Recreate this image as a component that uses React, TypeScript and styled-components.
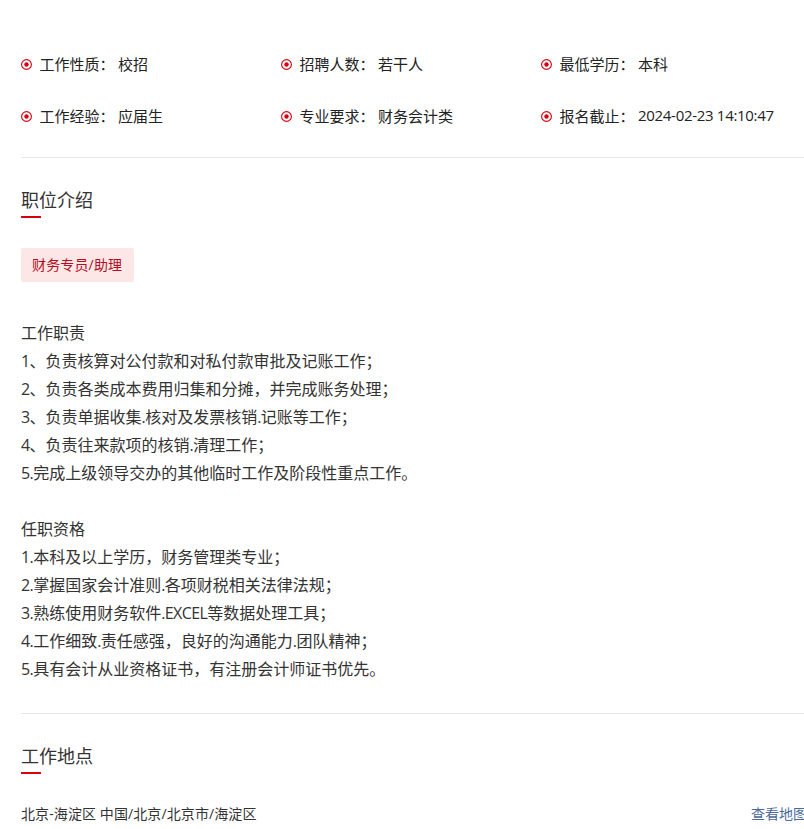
import styled, { createGlobalStyle } from "styled-components";

const GlobalStyle = createGlobalStyle`
    html, body { margin: 0; padding: 0; background: #fff; overflow: hidden; }
    body { font-family: "Open Sans", "Noto Sans CJK SC", sans-serif; color: #333; }
`

const Page = styled.div`
    width: 804px; height: 829px; overflow: hidden;
    padding: 38px 0 0 21px; box-sizing: border-box;
`
const Content = styled.div`
    width: 786px;
`
const MetaGrid = styled.div`
    display: grid; grid-template-columns: repeat(3, 260px); grid-auto-rows: 52px;
    padding-bottom: 15px;
    border-bottom: 1px solid #e8e8e8;
`
const MetaItem = styled.div`
    display: flex; align-items: center; height: 52px;
    font-size: 15px; color: #222;
`
const MetaIcon = styled.svg`
    width: 11px; height: 11px; margin-right: 8px; flex-shrink: 0;
`
const MetaLabel = styled.span`
    width: 79px; flex-shrink: 0; padding-bottom: 2px; margin-left: -0.5px;
`
const MetaValue = styled.span<{ $date?: boolean }>`
    padding-bottom: 2px; white-space: nowrap; margin-left: -0.5px;
    letter-spacing: ${props => props.$date ? "-0.3px" : "0"};
`
const SectionTitle = styled.h2`
    position: relative; margin: 0; padding-top: 29px; height: 31px;
    font-size: 18px; line-height: 26px; font-weight: 400; color: #333;
    &::after {
        content: ""; position: absolute; left: 0; bottom: 0;
        width: 20px; height: 2px; background: #d7000f;
    }
`
const Tag = styled.div`
    display: inline-block; margin-top: 30px; padding: 0 12px 0 11px;
    height: 34px; line-height: 34px; border-radius: 2px;
    background: #fce6e6; color: #b30f1e; font-size: 14px; letter-spacing: 0.15px;
`
const Description = styled.div`
    margin-top: 37px; padding-bottom: 30px;
    font-size: 16px; line-height: 28px; color: #333;
    border-bottom: 1px solid #e8e8e8;
`
const Line = styled.div`
    min-height: 28px;
`
const LatinRun = styled.span`
    letter-spacing: -0.6px;
`
const LocationRow = styled.div`
    display: flex; justify-content: space-between; margin-top: 29px;
    font-size: 14px; line-height: 22px; color: #333; white-space: nowrap;
`
const LocationText = styled.span`
    letter-spacing: 0.1px;
`
const MapLink = styled.a`
    color: #4a6a9c;
`

const metaItems = [
    ["工作性质：", "校招"],
    ["招聘人数：", "若干人"],
    ["最低学历：", "本科"],
    ["工作经验：", "应届生"],
    ["专业要求：", "财务会计类"],
    ["报名截止：", "2024-02-23 14:10:47"],
]

const lines = [
    "工作职责",
    "1、负责核算对公付款和对私付款审批及记账工作；",
    "2、负责各类成本费用归集和分摊，并完成账务处理；",
    "3、负责单据收集.核对及发票核销.记账等工作；",
    "4、负责往来款项的核销.清理工作；",
    "5.完成上级领导交办的其他临时工作及阶段性重点工作。",
    "",
    "任职资格",
    "1.本科及以上学历，财务管理类专业；",
    "2.掌握国家会计准则.各项财税相关法律法规；",
    "3.熟练使用财务软件.EXCEL等数据处理工具；",
    "4.工作细致.责任感强，良好的沟通能力.团队精神；",
    "5.具有会计从业资格证书，有注册会计师证书优先。",
]

// latin runs come out wider than the cjk text around them, tighten only those
function renderLine(line: string) {
    return line.split(/([0-9A-Z.]+)/).map((part, i) =>
        i % 2 === 1 ? <LatinRun key={i}>{part}</LatinRun> : part
    )
}

function App() {
    return (
        <Page>
            <GlobalStyle />
            <Content>
                <MetaGrid>
                    {metaItems.map(([label, value]) => (
                        <MetaItem key={label}>
                            <MetaIcon viewBox="0 0 11 11">
                                <circle cx="5.5" cy="5.5" r="4.9" fill="none" stroke="#d7000f" strokeWidth="1.1" />
                                <circle cx="5.5" cy="5.5" r="2.2" fill="#d7000f" />
                            </MetaIcon>
                            <MetaLabel>{label}</MetaLabel>
                            <MetaValue $date={label === "报名截止："}>{value}</MetaValue>
                        </MetaItem>
                    ))}
                </MetaGrid>
                <SectionTitle>职位介绍</SectionTitle>
                <Tag>财务专员/助理</Tag>
                <Description>
                    {lines.map((line, i) => (
                        <Line key={i}>{renderLine(line)}</Line>
                    ))}
                </Description>
                <SectionTitle>工作地点</SectionTitle>
                <LocationRow>
                    <LocationText>北京-海淀区 中国/北京/北京市/海淀区</LocationText>
                    <MapLink>查看地图</MapLink>
                </LocationRow>
            </Content>
        </Page>
    )
}

export default App
